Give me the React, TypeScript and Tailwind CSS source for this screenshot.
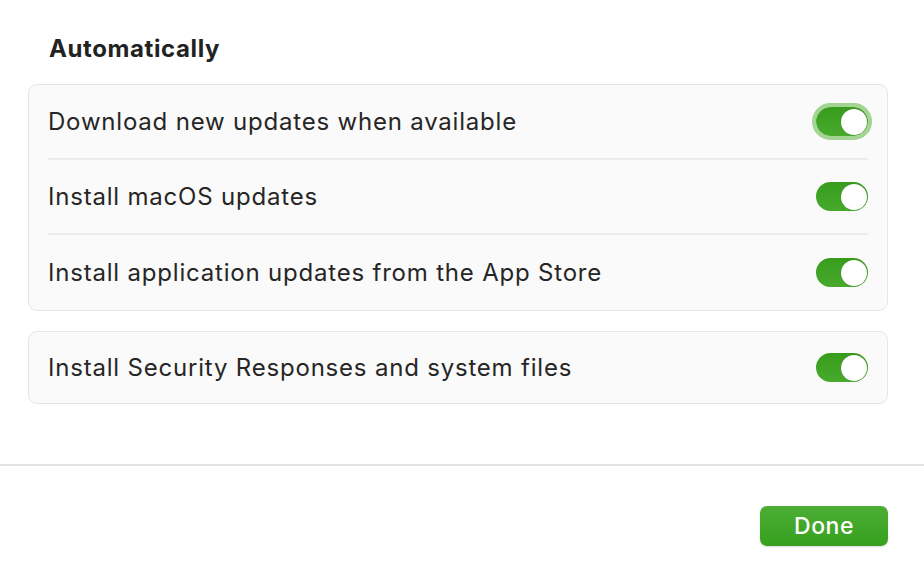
import React, { useState } from "react";

type Row = { label: string; on: boolean; focused?: boolean };

const Toggle: React.FC<{ on: boolean; focused?: boolean; onClick: () => void }> = ({ on, focused, onClick }) => (
  <button
    onClick={onClick}
    className={
      "relative flex h-[29px] w-[52px] shrink-0 items-center rounded-full p-[1.5px] " +
      (on ? "bg-gradient-to-b from-[#389c1b] to-[#47aa2d] justify-end" : "bg-[#e2e2e2] justify-start") +
      (focused ? " outline-[4px] outline outline-[#a3d494]" : "")
    }
  >
    <span className="block h-[26px] w-[26px] rounded-full bg-white shadow-[0_0_1px_rgba(0,0,0,0.3)]" />
  </button>
);

export default function App() {
  const [rows, setRows] = useState<Row[]>([
    { label: "Download new updates when available", on: true, focused: true },
    { label: "Install macOS updates", on: true },
    { label: "Install application updates from the App Store", on: true },
  ]);
  const [security, setSecurity] = useState(true);

  const flip = (i: number) =>
    setRows(rows.map((r, j) => (j === i ? { ...r, on: !r.on } : r)));

  return (
    <div
      className="flex h-[580px] w-[924px] flex-col bg-white text-[#262626]"
      style={{ fontFamily: "Inter, 'Noto Sans', sans-serif" }}
    >
      <div className="pl-[28px] pr-[36px] pt-[34px]">
        <h2 className="pl-[21px] text-[24px] font-bold leading-[30px] tracking-[0.6px] text-[#222]">Automatically</h2>

        <div className="mt-[20px] rounded-[9px] border border-[#e6e6e6] bg-[#fafafa]">
          {rows.map((r, i) => (
            <div key={r.label} className="mx-[19px]">
              <div
                className={
                  "flex h-[75px] items-center justify-between " +
                  (i < rows.length - 1 ? "border-b-2 border-[#ebebeb]" : "")
                }
              >
                <span className="text-[24px] tracking-[0.8px]">{r.label}</span>
                <Toggle on={r.on} focused={r.focused} onClick={() => flip(i)} />
              </div>
            </div>
          ))}
        </div>

        <div className="mt-[20px] rounded-[9px] border border-[#e6e6e6] bg-[#fafafa]">
          <div className="mx-[19px] flex h-[71px] items-center justify-between">
            <span className="text-[24px] tracking-[0.8px]">Install Security Responses and system files</span>
            <Toggle on={security} onClick={() => setSecurity(!security)} />
          </div>
        </div>
      </div>

      <div className="mt-[60px] border-t-2 border-[#e3e3e3]" />

      <div className="flex justify-end px-[36px] pt-[40px]">
        <button className="h-[40px] w-[128px] rounded-[7px] bg-gradient-to-b from-[#4cae35] to-[#36a01c] text-[23px] font-medium leading-[38px] tracking-[0.5px] text-white shadow-[0_1px_2px_rgba(0,0,0,0.15)]">
          Done
        </button>
      </div>
    </div>
  );
}
